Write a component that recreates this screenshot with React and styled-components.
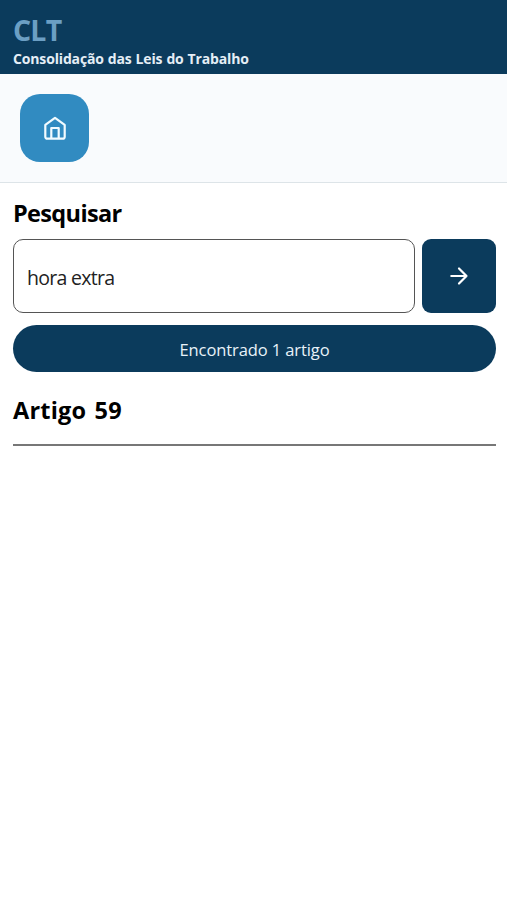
import React from 'react'
import styled, { createGlobalStyle } from 'styled-components'

function App() {
  return (
    <Page>
      <GlobalStyle />
      <Header>
        <Logo>CLT</Logo>
        <Subtitle>Consolidação das Leis do Trabalho</Subtitle>
      </Header>
      <Nav>
        <HomeButton aria-label="Início">
          <HomeIcon />
        </HomeButton>
      </Nav>
      <Content>
        <Title $spacing="-0.65px">Pesquisar</Title>
        <SearchRow>
          <SearchInput defaultValue="hora extra" />
          <SearchButton aria-label="Pesquisar">
            <ArrowIcon />
          </SearchButton>
        </SearchRow>
        <Result>Encontrado 1 artigo</Result>
        <Title $spacing="0.2px">Artigo 59</Title>
        <Divider />
      </Content>
    </Page>
  )
}

export default App

function HomeIcon() {
  return (
    <svg width="24" height="26" viewBox="0 0 24 26" fill="none" stroke="#f2fbff" strokeWidth="2.2" strokeLinejoin="round">
      <path d="M2.3 9.9 12 2.8l9.7 7.1v11.8a2 2 0 0 1-2 2H4.3a2 2 0 0 1-2-2z" />
      <path d="M8.3 23.7V13h7.4v10.7" />
    </svg>
  )
}

function ArrowIcon() {
  return (
    <svg width="20" height="20" viewBox="0 0 20 20" fill="none" stroke="#fff" strokeWidth="2.2" strokeLinecap="round" strokeLinejoin="round">
      <path d="M2.3 10h15.2M10 2.5l7.5 7.5-7.5 7.5" />
    </svg>
  )
}

const GlobalStyle = createGlobalStyle`
  * {
    box-sizing: border-box;
  }
  body {
    margin: 0;
    background: #fff;
    font-family: "Segoe UI", "Open Sans", "Noto Sans", sans-serif;
  }
`;

const Page = styled.div`
  min-height: 900px;
`;

const Header = styled.header`
  height: 74px;
  padding: 11px 13px 0;
  background: #0b3b5c;
`;

const Logo = styled.h1`
  margin: 0;
  color: #6b9fc4;
  font-size: 28.5px;
  font-weight: 700;
  line-height: 38px;
  letter-spacing: -0.8px;
`;

const Subtitle = styled.p`
  margin: 0;
  color: #e4eef6;
  font-size: 14px;
  font-weight: 700;
  line-height: 19px;
  letter-spacing: -0.15px;
  word-spacing: 0.5px;
  white-space: nowrap;
`;

const Nav = styled.nav`
  height: 109px;
  padding: 20px;
  background: #f9fbfd;
  border-bottom: 1px solid #dde4e8;
`;

const HomeButton = styled.button`
  display: flex;
  align-items: center;
  justify-content: center;
  width: 69px;
  height: 68px;
  padding: 0;
  border: none;
  border-radius: 20px;
  background: #318bc1;
`;

const Content = styled.main`
  padding: 13px 11px 0 13px;
`;

const Title = styled.h2`
  margin: 0;
  color: #000;
  font-size: 23.5px;
  font-weight: 700;
  line-height: 34px;
  letter-spacing: ${(props) => props.$spacing};
  word-spacing: 2px;
`;

const SearchRow = styled.div`
  display: flex;
  gap: 7px;
  margin-top: 9px;
`;

const SearchInput = styled.input`
  flex: 1;
  min-width: 0;
  height: 74px;
  padding: 2px 12px 0 13px;
  border: 1.4px solid #555;
  border-radius: 10px;
  outline: none;
  background: #fff;
  color: #222;
  font-family: inherit;
  font-size: 19.5px;
  letter-spacing: -0.7px;
`;

const SearchButton = styled.button`
  display: flex;
  align-items: center;
  justify-content: center;
  width: 74px;
  height: 74px;
  padding: 0;
  border: none;
  border-radius: 9px;
  background: #0b3b5c;
`;

const Result = styled.div`
  height: 47px;
  margin: 12px 0 21px;
  border-radius: 24px;
  background: #0b3b5c;
  color: #e8f2f9;
  font-size: 16.5px;
  line-height: 49px;
  letter-spacing: -0.1px;
  text-align: center;
`;

const Divider = styled.hr`
  height: 2px;
  margin: 17px 0 0;
  border: none;
  background: #777;
`;
